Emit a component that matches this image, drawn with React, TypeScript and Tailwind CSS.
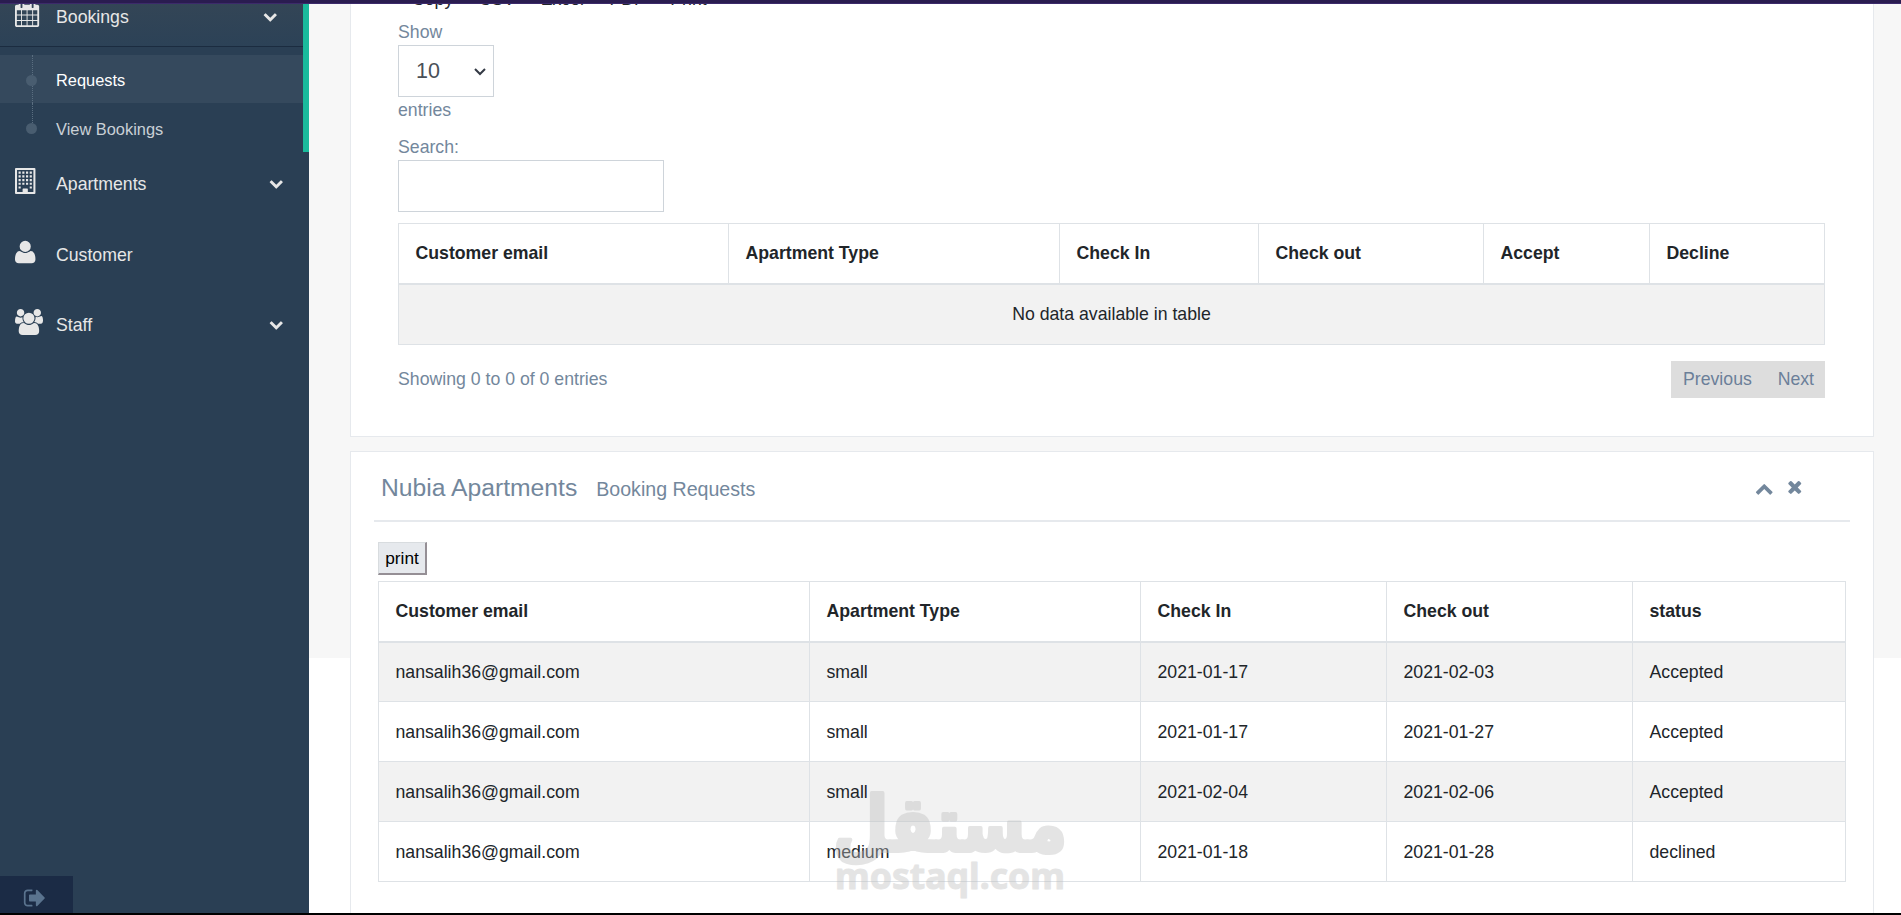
import type { ReactNode } from "react"

const icons = {
  calendar:
    "M192 1664h288v-288h-288v288zm352 0h320v-288h-320v288zm-352-352h288v-320h-288v320zm352 0h320v-320h-320v320zm-352-384h288v-288h-288v288zm736 736h320v-288h-320v288zm-384-736h320v-288h-320v288zm768 736h288v-288h-288v288zm-384-352h320v-320h-320v320zm-352-864v-288q0-13-9.5-22.5t-22.5-9.5h-64q-13 0-22.5 9.5t-9.5 22.5v288q0 13 9.5 22.5t22.5 9.5h64q13 0 22.5-9.5t9.5-22.5zm736 864h288v-320h-288v320zm-384-384h320v-288h-320v288zm384 0h288v-288h-288v288zm32-480v-288q0-13-9.5-22.5t-22.5-9.5h-64q-13 0-22.5 9.5t-9.5 22.5v288q0 13 9.5 22.5t22.5 9.5h64q13 0 22.5-9.5t9.5-22.5zm384-64v1280q0 52-38 90t-90 38h-1408q-52 0-90-38t-38-90v-1280q0-52 38-90t90-38h128v-96q0-66 47-113t113-47h64q66 0 113 47t47 113v96h384v-96q0-66 47-113t113-47h64q66 0 113 47t47 113v96h128q52 0 90 38t38 90z",
  building:
    "M128 0h1280q64 0 64 64v1664q0 64-64 64h-1280q-64 0-64-64v-1664q0-64 64-64zm76 140v1512h384v-212q0-32 32-32h296q32 0 32 32v212h384v-1512zM310 246h148v148h-148zm256 0h148v148h-148zm256 0h148v148h-148zm256 0h148v148h-148zM310 502h148v148h-148zm256 0h148v148h-148zm256 0h148v148h-148zm256 0h148v148h-148zM310 758h148v148h-148zm256 0h148v148h-148zm256 0h148v148h-148zm256 0h148v148h-148zM310 1014h148v148h-148zm256 0h148v148h-148zm256 0h148v148h-148zm256 0h148v148h-148zM310 1270h148v148h-148zm768 0h148v148h-148z",
  user: "M1600 1405q0 120-73 189.5t-194 69.5h-874q-121 0-194-69.5t-73-189.5q0-53 3.5-103.5t14-109 26.5-108.5 43-97.5 62-81 85.5-53.5 111.5-20q9 0 42 21.5t74.5 48 108 48 133.5 21.5 133.5-21.5 108-48 74.5-48 42-21.5q61 0 111.5 20t85.5 53.5 62 81 43 97.5 26.5 108.5 14 109 3.5 103.5zm-320-893q0 159-112.5 271.5t-271.5 112.5-271.5-112.5-112.5-271.5 112.5-271.5 271.5-112.5 271.5 112.5 112.5 271.5z",
  users:
    "M657 896q-162 5-265 128h-134q-82 0-138-40.5t-56-118.5q0-353 124-353 6 0 43.5 21t97.5 42.5 119 21.5q67 0 133-23-5 37-5 66 0 159 93 293zm1071 637q0 120-73 189.5t-194 69.5h-874q-121 0-194-69.5t-73-189.5q0-53 3.5-103.5t14-109 26.5-108.5 43-97.5 62-81 85.5-53.5 111.5-20q10 0 43 21.5t73 48 107 48 135 21.5 135-21.5 107-48 73-48 43-21.5q61 0 111.5 20t85.5 53.5 62 81 43 97.5 26.5 108.5 14 109 3.5 103.5zm-1024-1277q0 106-75 181t-181 75-181-75-75-181 75-181 181-75 181 75 75 181zm704 384q0 159-112.5 271.5t-271.5 112.5-271.5-112.5-112.5-271.5 112.5-271.5 271.5-112.5 271.5 112.5 112.5 271.5zm576 225q0 78-56 118.5t-138 40.5h-134q-103-123-265-128 93-134 93-293 0-29-5-66 66 23 133 23 59 0 119-21.5t97.5-42.5 43.5-21q124 0 124 353zm-128-609q0 106-75 181t-181 75-181-75-75-181 75-181 181-75 181 75 75 181z",
  down: "M1683 808l-742 741q-19 19-45 19t-45-19l-742-741q-19-19-19-45.5t19-45.5l166-165q19-19 45-19t45 19l531 531 531-531q19-19 45-19t45 19l166 165q19 19 19 45.5t-19 45.5z",
  up: "M1683 1331l-166 165q-19 19-45 19t-45-19l-531-531-531 531q-19 19-45 19t-45-19l-166-165q-19-19-19-45.5t19-45.5l742-741q19-19 45-19t45 19l742 741q19 19 19 45.5t-19 45.5z",
  close:
    "M1490 1322q0 40-28 68l-136 136q-28 28-68 28t-68-28l-294-294-294 294q-28 28-68 28t-68-28l-136-136q-28-28-28-68t28-68l294-294-294-294q-28-28-28-68t28-68l136-136q28-28 68-28t68 28l294 294 294-294q28-28 68-28t68 28l136 136q28 28 28 68t-28 68l-294 294 294 294q28 28 28 68z",
  logout:
    "M704 1440q0 4 1 20t.5 26.5-3 23.5-10 19.5-20.5 6.5h-320q-119 0-203.5-84.5t-84.5-203.5v-704q0-119 84.5-203.5t203.5-84.5h320q13 0 22.5 9.5t9.5 22.5q0 4 1 20t.5 26.5-3 23.5-10 19.5-20.5 6.5h-320q-66 0-113 47t-47 113v704q0 66 47 113t113 47h312l11.5 1 11.5 3 8 5.5 7 9 2 13.5zm928-544q0 26-19 45l-544 544q-19 19-45 19t-45-19-19-45v-288h-448q-26 0-45-19t-19-45v-384q0-26 19-45t45-19h448v-288q0-26 19-45t45-19 45 19l544 544q19 19 19 45z",
}

const exportButtons = ["Copy", "CSV", "Excel", "PDF", "Print"]

const pendingColumns = ["Customer email", "Apartment Type", "Check In", "Check out", "Accept", "Decline"]

const requestColumns = ["Customer email", "Apartment Type", "Check In", "Check out", "status"]

const requests = [
  ["nansalih36@gmail.com", "small", "2021-01-17", "2021-02-03", "Accepted"],
  ["nansalih36@gmail.com", "small", "2021-01-17", "2021-01-27", "Accepted"],
  ["nansalih36@gmail.com", "small", "2021-02-04", "2021-02-06", "Accepted"],
  ["nansalih36@gmail.com", "medium", "2021-01-18", "2021-01-28", "declined"],
]

export default function App() {
  return (
    <div className="relative flex h-[915px] w-[1901px] flex-col overflow-hidden bg-white font-['Liberation_Sans',Arial,sans-serif] text-[17.7px] leading-[26px] text-[#73879c]">
      <div className="h-1 shrink-0 border-b border-[#3c2a6b] bg-[#2a1c50]" />
      <div className="flex min-h-0 flex-1">
        <Sidebar />
        <main className="min-w-0 flex-1 overflow-hidden bg-[linear-gradient(#f7f7f7,#f7f7f7)] bg-[length:100%_654px] bg-no-repeat pl-[41px] pr-[27px]">
          <PendingPanel />
          <RequestsPanel />
        </main>
      </div>
      <div className="h-0.5 shrink-0 bg-black" />
      <Watermark />
    </div>
  )
}

function Sidebar() {
  return (
    <aside className="flex w-[309px] shrink-0 flex-col overflow-hidden bg-[#2a3f54] text-[#e7e7e7]">
      <div className="h-[148px] border-r-[6px] border-[#1abb9c]">
        <div className="flex h-[43px] items-start border-b border-[#1b2c40] bg-linear-to-b from-[#334556] to-[#2c4257] pl-[15px] pr-[26px]">
          <Icon name="calendar" className="mt-[-3px] size-[26px]" />
          <span className="ml-[15px]">Bookings</span>
          <Icon name="down" className="ml-auto mt-[5px] size-[14.5px]" />
        </div>
        <ul className="pt-2">
          <SubItem label="Requests" current />
          <SubItem label="View Bookings" />
        </ul>
      </div>
      <NavItem icon="building" label="Apartments" expandable />
      <NavItem icon="user" label="Customer" />
      <NavItem icon="users" label="Staff" expandable />
      <div className="mt-auto flex h-[37px] w-[73px] items-center justify-center bg-[#1b2b45] pt-[6px] pr-[3px] text-[#5a738e]">
        <Icon name="logout" className="size-6" />
      </div>
    </aside>
  )
}

function SubItem({ label, current = false }: { label: string; current?: boolean }) {
  return (
    <li className={`relative flex h-12 items-center pl-14 text-[16.4px] ${current ? "bg-[#35495d] pt-px text-white" : "pt-[3px] text-[#c9d0d6]"}`}>
      <span className={`absolute left-8 top-0 border-l border-dotted border-[#5a6e80] ${current ? "h-12" : "h-6"}`} />
      <span className="absolute left-[26px] top-[20px] size-[11px] rounded-full bg-[#495d70]" />
      {label}
    </li>
  )
}

function NavItem({ icon, label, expandable = false }: { icon: keyof typeof icons; label: string; expandable?: boolean }) {
  return (
    <div className="flex h-[70.5px] items-start pl-[15px] pr-[26px] pt-[16px]">
      <Icon name={icon} className="h-[26px] w-[30px]" />
      <span className="ml-[11px] mt-[3px]">{label}</span>
      {expandable ? <Icon name="down" className="ml-auto mt-[8px] size-[14.5px]" /> : null}
    </div>
  )
}

function Panel({ className, children }: { className: string; children: ReactNode }) {
  return <section className={`flow-root border border-[#e6e9ed] bg-white ${className}`}>{children}</section>
}

function PendingPanel() {
  return (
    <Panel className="h-[433px] border-t-0 px-[47px]">
      <div className="mt-[-18px] flex h-[33px] gap-[25.5px] pl-[14px] text-[#212529]">
        {exportButtons.map((label) => (
          <span key={label}>{label}</span>
        ))}
      </div>
      <div>Show</div>
      <div className="flex h-[52px] w-24 items-center justify-between border border-[#ced4da] pl-[17px] pr-[7px] text-[21.5px] text-[#495057]">
        10
        <svg viewBox="0 0 12 8" className="mt-0.5 h-2 w-3" fill="none" stroke="#343a45" strokeWidth="2">
          <path d="M1 1l5 5 5-5" />
        </svg>
      </div>
      <div>entries</div>
      <div className="mt-[11px]">Search:</div>
      <div className="h-[52px] w-[266px] border border-[#ced4da]" />
      <table className="mt-[11px] w-[1427px] table-fixed border-collapse text-[#212529]">
        <colgroup>
          <col className="w-[330px]" />
          <col className="w-[331px]" />
          <col className="w-[199px]" />
          <col className="w-[225px]" />
          <col className="w-[166px]" />
          <col />
        </colgroup>
        <TableHead columns={pendingColumns} />
        <tbody>
          <tr className="h-[61px] bg-[#f2f2f2]">
            <td colSpan={6} className="border border-[#dee2e6] text-center">
              No data available in table
            </td>
          </tr>
        </tbody>
      </table>
      <div className="mt-4 flex items-start justify-between pr-px">
        <span className="mt-[5px]">Showing 0 to 0 of 0 entries</span>
        <div className="flex h-[37px] w-[154px] items-center justify-between bg-[#dddddd] pb-0.5 pl-[12px] pr-[11px] text-[#6b7f99]">
          <span>Previous</span>
          <span>Next</span>
        </div>
      </div>
    </Panel>
  )
}

function RequestsPanel() {
  return (
    <Panel className="mt-[14px] h-[480px] px-[23px]">
      <header className="flex h-[70px] items-center border-b-2 border-[#e6e9ed] pl-[7px] pr-[46px] pt-[4px]">
        <h2 className="text-[24.7px]">Nubia Apartments</h2>
        <small className="ml-[19px] mt-[2px] text-[19.6px]">Booking Requests</small>
        <Icon name="up" className="ml-auto size-[18.5px]" />
        <Icon name="close" className="ml-[11px] mt-[-2px] size-[19.5px]" />
      </header>
      <div className="pl-1">
        <button className="mt-5 block h-[33px] w-[49px] border-b-2 border-l border-r-2 border-t border-b-[#958f95] border-l-[#d8dcdf] border-r-[#958f95] border-t-[#d8dcdf] bg-[#e6e9ed] text-[17.3px] text-black">
          print
        </button>
        <table className="mt-[6px] w-[1468px] table-fixed border-collapse text-[#212529]">
          <colgroup>
            <col className="w-[431px]" />
            <col className="w-[331px]" />
            <col className="w-[246px]" />
            <col className="w-[246px]" />
            <col />
          </colgroup>
          <TableHead columns={requestColumns} />
          <tbody>
            {requests.map((row, i) => (
              <tr key={i} className="h-[60px] odd:bg-[#f2f2f2]">
                {row.map((cell, j) => (
                  <td key={j} className="border border-[#dee2e6] px-[16.5px] pt-px">
                    {cell}
                  </td>
                ))}
              </tr>
            ))}
          </tbody>
        </table>
      </div>
    </Panel>
  )
}

function TableHead({ columns }: { columns: string[] }) {
  return (
    <thead>
      <tr className="h-[60px]">
        {columns.map((column) => (
          <th key={column} className="border border-b-2 border-[#dee2e6] px-[16.5px] text-left font-bold">
            {column}
          </th>
        ))}
      </tr>
    </thead>
  )
}

// the sidebar glyphs differ in width, so each viewBox starts at its own left edge
const viewBoxes: Partial<Record<keyof typeof icons, string>> = {
  building: "64 0 2048 1792",
  user: "192 0 2048 1792",
  users: "64 0 2048 1792",
  calendar: "64 0 1792 1792",
}

function Icon({ name, className }: { name: keyof typeof icons; className: string }) {
  return (
    <svg
      viewBox={viewBoxes[name] ?? "0 0 1792 1792"}
      preserveAspectRatio="xMinYMid meet"
      fill="currentColor"
      className={`shrink-0 ${name === "building" ? "[fill-rule:evenodd]" : ""} ${className}`}
    >
      <path d={icons[name]} />
    </svg>
  )
}

function Watermark() {
  return (
    <svg
      viewBox="0 0 230 112"
      className="pointer-events-none absolute left-[835px] top-[788px] h-[112px] w-[230px] opacity-40"
      fill="#bdbdbd"
      stroke="#bdbdbd"
      strokeLinejoin="round"
    >
      <text x="-2" y="63" textLength="234" lengthAdjust="spacingAndGlyphs" fontSize="76" strokeWidth="4" className="font-['DejaVu_Sans',sans-serif] font-bold">
        مستقل
      </text>
      <text x="0" y="101" textLength="230" lengthAdjust="spacingAndGlyphs" fontSize="36" strokeWidth="1" className="font-['Noto_Sans',sans-serif] font-bold">
        mostaql.com
      </text>
    </svg>
  )
}
